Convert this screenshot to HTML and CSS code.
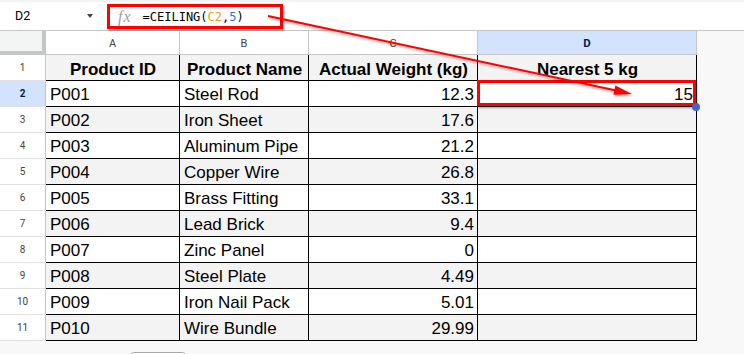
FILE: index.html
```html
<!DOCTYPE html>
<html>
<head>
<meta charset="utf-8">
<link rel="stylesheet" href="styles.css">
</head>
<body>
<div class="app">
  <div class="topbar">
    <div class="namebox"><span class="ref-name">D2</span><span class="caret"></span></div>
    <div class="formula"><span class="fx">fx</span><span class="code">=CEILING(<span class="c-ref">C2</span>,<span class="c-num">5</span>)</span></div>
  </div>
  <div class="sheet">
    <div class="row colheads">
      <div class="corner"></div>
      <div class="ch">A</div>
      <div class="ch">B</div>
      <div class="ch">C</div>
      <div class="ch sel">D</div>
      <div class="side"></div>
    </div>
    <div class="row odd head">
      <div class="rh">1</div>
      <div class="c ctr">Product ID</div>
      <div class="c ctr">Product Name</div>
      <div class="c ctr">Actual Weight (kg)</div>
      <div class="c ctr">Nearest 5 kg</div>
      <div class="side"></div>
    </div>
    <div class="row">
      <div class="rh sel">2</div>
      <div class="c">P001</div>
      <div class="c">Steel Rod</div>
      <div class="c num">12.3</div>
      <div class="c num active">15</div>
      <div class="side"></div>
    </div>
    <div class="row odd">
      <div class="rh">3</div>
      <div class="c">P002</div>
      <div class="c">Iron Sheet</div>
      <div class="c num">17.6</div>
      <div class="c num"></div>
      <div class="side"></div>
    </div>
    <div class="row">
      <div class="rh">4</div>
      <div class="c">P003</div>
      <div class="c">Aluminum Pipe</div>
      <div class="c num">21.2</div>
      <div class="c num"></div>
      <div class="side"></div>
    </div>
    <div class="row odd">
      <div class="rh">5</div>
      <div class="c">P004</div>
      <div class="c">Copper Wire</div>
      <div class="c num">26.8</div>
      <div class="c num"></div>
      <div class="side"></div>
    </div>
    <div class="row">
      <div class="rh">6</div>
      <div class="c">P005</div>
      <div class="c">Brass Fitting</div>
      <div class="c num">33.1</div>
      <div class="c num"></div>
      <div class="side"></div>
    </div>
    <div class="row odd">
      <div class="rh">7</div>
      <div class="c">P006</div>
      <div class="c">Lead Brick</div>
      <div class="c num">9.4</div>
      <div class="c num"></div>
      <div class="side"></div>
    </div>
    <div class="row">
      <div class="rh">8</div>
      <div class="c">P007</div>
      <div class="c">Zinc Panel</div>
      <div class="c num">0</div>
      <div class="c num"></div>
      <div class="side"></div>
    </div>
    <div class="row odd">
      <div class="rh">9</div>
      <div class="c">P008</div>
      <div class="c">Steel Plate</div>
      <div class="c num">4.49</div>
      <div class="c num"></div>
      <div class="side"></div>
    </div>
    <div class="row">
      <div class="rh">10</div>
      <div class="c">P009</div>
      <div class="c">Iron Nail Pack</div>
      <div class="c num">5.01</div>
      <div class="c num"></div>
      <div class="side"></div>
    </div>
    <div class="row odd">
      <div class="rh">11</div>
      <div class="c">P010</div>
      <div class="c">Wire Bundle</div>
      <div class="c num">29.99</div>
      <div class="c num"></div>
      <div class="side"></div>
    </div>
  </div>
  <div class="footer"><div class="tabbtn"></div></div>
  <svg class="arrow" width="744" height="354" viewBox="0 0 744 354">
    <defs>
      <filter id="sh" x="-10%" y="-10%" width="120%" height="140%">
        <feDropShadow dx="1" dy="1.5" stdDeviation="1" flood-color="#000" flood-opacity="0.35"/>
      </filter>
    </defs>
    <g filter="url(#sh)">
      <line x1="268" y1="16" x2="616" y2="90.5" stroke="#ff0000" stroke-width="2"/>
      <polygon points="632,94 613.4,94.8 615.3,85.6" fill="#ff0000"/>
    </g>
  </svg>
</div>
</body>
</html>
```
FILE: styles.css
```css
* { box-sizing: border-box; }
html, body { margin: 0; padding: 0; }
body { width: 744px; height: 354px; overflow: hidden; background: #f7f8f7; }
.app { position: relative; width: 744px; height: 354px; overflow: hidden; }

.topbar {
  height: 30px;
  background: #fff;
  display: flex;
  align-items: flex-start;
  box-shadow: inset 0 2px 0 #f3f4f4;
}
.namebox {
  width: 107px;
  height: 30px;
  display: flex;
  align-items: center;
  justify-content: space-between;
  padding: 1px 14px 0 15px;
  font-family: Roboto, "Liberation Sans", sans-serif;
  font-size: 12.5px;
  color: #000;
}
.caret {
  width: 0; height: 0;
  border-left: 3.5px solid transparent;
  border-right: 3.5px solid transparent;
  border-top: 4px solid #444;
}
.formula {
  margin-top: 4px;
  width: 176px;
  height: 25px;
  border: 3px solid #ff0000;
  box-shadow: 1px 2px 2px rgba(0,0,0,0.35);
  display: flex;
  align-items: center;
  padding-left: 8px;
}
.fx {
  font-family: "Liberation Serif", serif;
  font-style: italic;
  font-size: 16px;
  color: #a0a0a0;
  letter-spacing: 1px;
}
.code {
  margin-left: 11px;
  font-family: "DejaVu Sans Mono", monospace;
  font-size: 12px;
  color: #000;
}
.c-ref { color: #f29a18; }
.c-num { color: #3a6fd6; }

.sheet {
  border-top: 1px solid #c4c7c5;
  background: #f7f8f7;
}
.row {
  display: grid;
  grid-template-columns: 46px 134px 129px 169px 219px 1fr;
  height: 26px;
}
.row.colheads { height: 24px; }
.corner {
  background: #f3f4f4;
  border-right: 4px solid #c4c7c5;
  border-bottom: 4px solid #c4c7c5;
}
.ch {
  background: #fff;
  border-right: 1px solid #c4c7c5;
  border-bottom: 1px solid #c4c7c5;
  display: flex;
  align-items: center;
  justify-content: center;
  font-family: Roboto, "Liberation Sans", sans-serif;
  font-size: 11px;
  color: #444;
  padding-top: 1px;
}
.ch.sel { background: #d3e3fd; color: #041e49; font-weight: bold; font-size: 11.5px; }
.side { background: #f7f8f7; }

.rh {
  background: #fff;
  border-right: 1px solid #c4c7c5;
  border-bottom: 1px solid #e1e1e1;
  display: flex;
  align-items: center;
  justify-content: center;
  font-family: Roboto, "Liberation Sans", sans-serif;
  font-size: 10px;
  color: #444;
}
.rh.sel { background: #d3e3fd; color: #041e49; font-weight: bold; }

.c {
  background: #fff;
  border-right: 1px solid #000;
  border-bottom: 1px solid #000;
  display: flex;
  align-items: flex-end;
  padding: 0 3px 1px 4px;
  font-family: "Liberation Sans", Arial, sans-serif;
  font-size: 17px;
  line-height: 20px;
  color: #000;
  white-space: nowrap;
  overflow: hidden;
}
.row.odd .c { background: #f3f3f3; }
.head .c { font-weight: bold; }
.c.ctr { justify-content: center; padding-bottom: 0; }
.c.num { justify-content: flex-end; }

.c.active { position: relative; overflow: visible; }
.c.active::after {
  content: "";
  position: absolute;
  left: -1px; top: -1px; right: 0; bottom: 0;
  border: 3px solid #ff0000;
  box-shadow: 1px 2px 2px rgba(0,0,0,0.35);
}
.c.active::before {
  content: "";
  position: absolute;
  left: 214px; top: 22px;
  width: 8px; height: 8px;
  border-radius: 50%;
  background: #4763c6;
  z-index: 2;
}

.footer {
  height: 13px;
  background: #f7f8f7;
  overflow: hidden;
  padding: 11px 0 0 130px;
}
.tabbtn {
  width: 56px;
  height: 12px;
  border: 1px solid #a8aaa8;
  border-radius: 4px;
  background: #fff;
}

.arrow { position: absolute; left: 0; top: 0; pointer-events: none; }
```
